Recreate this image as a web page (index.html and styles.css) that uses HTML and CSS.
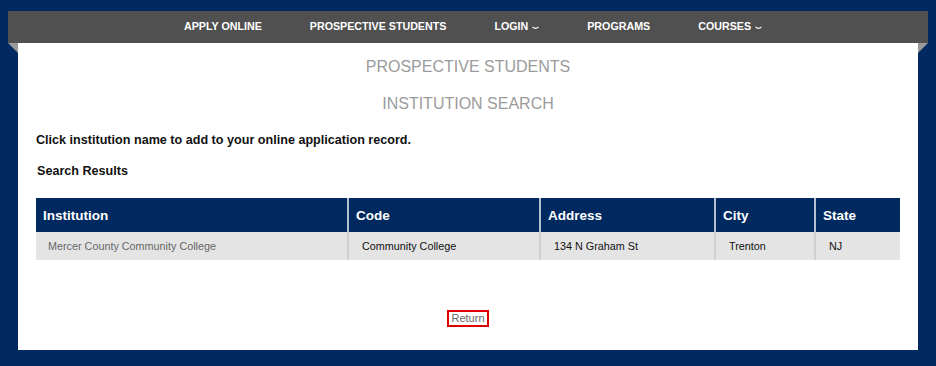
FILE: index.html
```html
<!DOCTYPE html>
<html>
<head>
<meta charset="utf-8">
<link rel="stylesheet" href="styles.css">
</head>
<body>
<nav class="nav">
  <a class="nav-item">APPLY ONLINE</a>
  <a class="nav-item">PROSPECTIVE STUDENTS</a>
  <a class="nav-item">LOGIN <svg class="chev" width="7" height="4" viewBox="0 0 7 4"><path d="M0.5 0.8 Q3.5 3.8 6.5 0.8" fill="none" stroke="#fff" stroke-width="1.2"/></svg></a>
  <a class="nav-item">PROGRAMS</a>
  <a class="nav-item">COURSES <svg class="chev" width="7" height="4" viewBox="0 0 7 4"><path d="M0.5 0.8 Q3.5 3.8 6.5 0.8" fill="none" stroke="#fff" stroke-width="1.2"/></svg></a>
</nav>
<main class="wrap">
  <h1 class="title">PROSPECTIVE STUDENTS</h1>
  <h2 class="title title2">INSTITUTION SEARCH</h2>
  <p class="lead">Click institution name to add to your online application record.</p>
  <p class="sub">Search Results</p>
  <table class="results">
    <thead>
      <tr>
        <th class="c1">Institution</th>
        <th class="c2">Code</th>
        <th class="c3">Address</th>
        <th class="c4">City</th>
        <th class="c5">State</th>
      </tr>
    </thead>
    <tbody>
      <tr>
        <td class="inst"><a>Mercer County Community College</a></td>
        <td>Community College</td>
        <td>134 N Graham St</td>
        <td>Trenton</td>
        <td>NJ</td>
      </tr>
    </tbody>
  </table>
  <div class="ret-row"><a class="ret">Return</a></div>
</main>
</body>
</html>
```
FILE: styles.css
```css
* { box-sizing: border-box; }
html, body { margin: 0; padding: 0; }
body {
  background: #002960;
  font-family: "Liberation Sans", Arial, sans-serif;
  padding-top: 11px;
  height: 366px;
  overflow: hidden;
}
.nav {
  margin: 0 8px;
  height: 32px;
  background: #505050;
  display: flex;
  justify-content: center;
  align-items: center;
  gap: 48px;
  padding-left: 10px;
  padding-bottom: 2px;
}
.nav-item {
  color: #fff;
  font-size: 10.7px;
  font-weight: bold;
  display: flex;
  align-items: center;
  gap: 4px;
}
.chev { margin-top: 3px; }
.wrap {
  position: relative;
  margin: 0 18px;
  background: #fff;
  height: 307px;
  padding: 0 18px;
}
.wrap::before,
.wrap::after {
  content: "";
  position: absolute;
  top: 0;
  width: 0;
  height: 0;
  border-top: 10px solid #9a9a9a;
}
.wrap::before {
  left: -10px;
  border-left: 10px solid transparent;
}
.wrap::after {
  right: -10px;
  border-right: 10px solid transparent;
}
.title {
  margin: 0;
  padding-top: 14px;
  text-align: center;
  font-size: 16px;
  font-weight: normal;
  line-height: 20px;
  color: #9b9b9b;
}
.title2 { padding-top: 17px; }
.lead {
  margin: 17px 0 0;
  font-size: 12.6px;
  font-weight: bold;
  line-height: 18px;
  color: #111;
}
.sub {
  margin: 13px 0 0;
  padding-left: 1px;
  font-size: 12.6px;
  font-weight: bold;
  line-height: 18px;
  color: #111;
}
.results {
  margin-top: 18px;
  width: 100%;
  border-collapse: collapse;
  table-layout: fixed;
}
.results th {
  background: #002960;
  color: #fff;
  font-size: 13.5px;
  font-weight: bold;
  text-align: left;
  height: 34px;
  padding: 0 7px;
  border-right: 2px solid #b7c0cc;
}
.results td {
  background: #e4e4e4;
  color: #111;
  font-size: 10.8px;
  height: 28px;
  padding: 0 13px;
  border-right: 2px solid #d0d0d0;
}
.results th:last-child, .results td:last-child { border-right: none; }
.c1 { width: 312px; }
.c2 { width: 192px; }
.c3 { width: 175px; }
.c4 { width: 100px; }
.c5 { width: 85px; }
.inst { color: #666 !important; padding-left: 12px !important; }
.ret-row {
  margin-top: 50px;
  text-align: center;
  line-height: 0;
}
.ret {
  display: inline-block;
  border: 2px solid #e00000;
  padding: 0 2px;
  font-size: 11px;
  line-height: 13px;
  color: #666;
}
```
